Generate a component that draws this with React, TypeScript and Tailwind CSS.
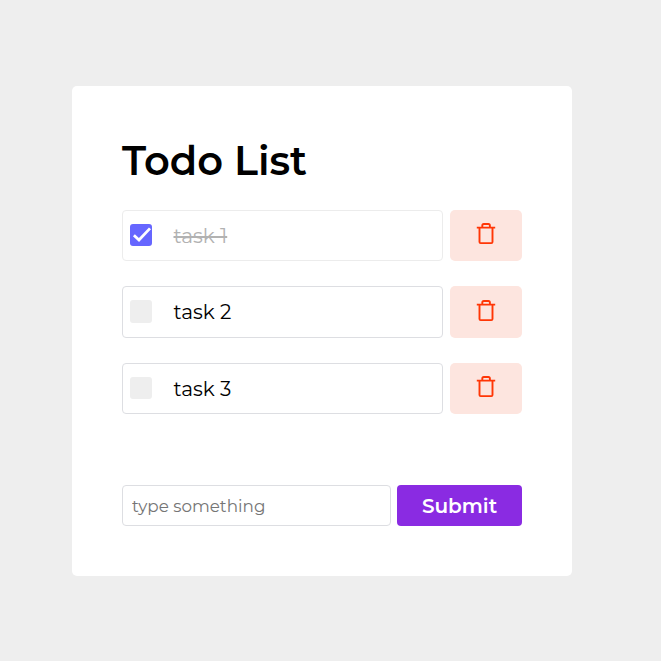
import { useState } from "react";

const initialTasks = [
  { id: 1, title: "task 1", done: true },
  { id: 2, title: "task 2", done: false },
  { id: 3, title: "task 3", done: false },
];

function TrashIcon() {
  return (
    <svg width="20" height="24" viewBox="0 0 20 24" fill="none" stroke="#ff3606" strokeWidth="1.9" strokeLinejoin="round">
      <path d="M0.8 5.6H19.2M6.3 5.4V3.6Q6.3 2 7.8 2H12.4Q13.9 2 13.9 3.6V5.4M3.5 5.6V19.9Q3.5 21.1 4.7 21.1H15.3Q16.5 21.1 16.5 19.9V5.6" />
    </svg>
  );
}

function Checkbox({ checked }: { checked: boolean }) {
  return (
    <span className={`mb-px flex h-[22.3px] w-[22px] shrink-0 items-center justify-center rounded-[3px] ${checked ? "bg-[#6666ff]" : "bg-[#eee]"}`}>
      {checked && (
        <svg width="22" height="22" viewBox="0 0 22 22" fill="none" stroke="white" strokeWidth="2.8">
          <path d="M3.9 11.2L9 16L20 4.4" />
        </svg>
      )}
    </span>
  );
}

export default function App() {
  const [tasks, setTasks] = useState(initialTasks);
  const toggle = (id: number) => setTasks(tasks.map((t) => (t.id === id ? { ...t, done: !t.done } : t)));
  const remove = (id: number) => setTasks(tasks.filter((t) => t.id !== id));

  return (
    <main className="flex h-[661px] w-[661px] bg-[#eee] pt-[86px] pl-[72px] font-['Montserrat','Inter','Liberation_Sans',sans-serif] text-black">
      <section className="flex h-[490px] w-[500px] flex-col rounded-[5px] bg-white p-[50px]">
        <h1 className="h-[73.8px] shrink-0 text-[40px] leading-[49px] font-semibold">Todo List</h1>
        <ul className="flex flex-col gap-[25px]">
          {tasks.map((task) => (
            <li key={task.id} className="flex h-[51.5px] gap-[7px]">
              <div onClick={() => toggle(task.id)} className={`flex w-[321px] items-center gap-[21.5px] rounded border pl-[7px] ${task.done ? "border-[#ececec]" : "border-[#dddee2]"}`}>
                <Checkbox checked={task.done} />
                <span className={`text-[20px] ${task.done ? "text-[#b2b2b2] line-through decoration-2" : ""}`}>{task.title}</span>
              </div>
              <button onClick={() => remove(task.id)} aria-label="Delete" className="flex w-[72px] justify-center rounded-[5px] bg-[#fde5df] pt-[12.3px]">
                <TrashIcon />
              </button>
            </li>
          ))}
        </ul>
        <form className="mt-auto flex h-[41px] gap-[6px]" onSubmit={(e) => e.preventDefault()}>
          <input placeholder="type something" className="w-[269px] rounded border border-[#dddee2] px-[9px] pt-[2px] text-[16.8px] placeholder:text-[#757575]" />
          <button className="w-[125px] rounded bg-[#8a2be2] text-[20px] font-semibold text-white">Submit</button>
        </form>
      </section>
    </main>
  );
}
